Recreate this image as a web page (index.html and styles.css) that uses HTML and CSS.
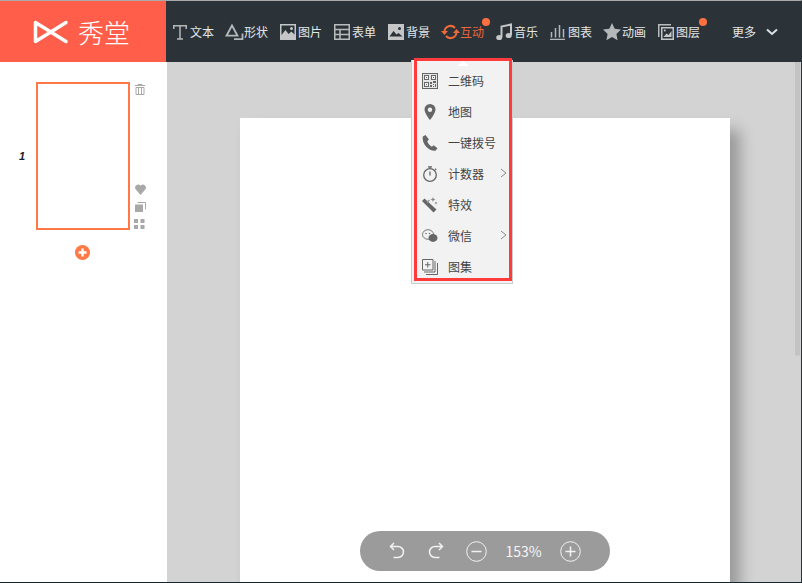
FILE: index.html
```html
<!DOCTYPE html>
<html lang="zh-CN">
<head>
    <meta charset="UTF-8">
    <meta name="viewport" content="width=device-width, initial-scale=1.0">
    <title>秀堂</title>
    <link rel="stylesheet" href="styles.css">
</head>
<body>
    <header class="topbar">
        <div class="logo">
            <svg class="logo-mark" width="36" height="26" viewBox="0 0 36 26"><path d="M2.5 3.500v19L33 3.500M2.500 3.500L33 22.500" fill="none" stroke="#fff" stroke-width="3.500" stroke-linecap="round" stroke-linejoin="round"/></svg>
            <span class="logo-text">秀堂</span>
        </div>
        <nav class="nav">
            <a class="nav-item nav-item-first">
                <svg class="nav-icon" width="16" height="18" viewBox="0 0 16 18"><path d="M.75 6V2.750h12.500V6M7 2.750V16M4 16h6" fill="none" stroke="#b4b8ba" stroke-width="1.500"/></svg>
                文本
            </a>
            <a class="nav-item nav-item-wide">
                <svg class="nav-icon" width="19" height="18" viewBox="0 0 19 18"><path d="M7 2.500l5.500 10.200H1.500zM9 16.200h8.500V10.500" fill="none" stroke="#b4b8ba" stroke-width="1.800"/></svg>
                形状
            </a>
            <a class="nav-item">
                <svg class="nav-icon" width="16" height="16" viewBox="0 0 16 16"><path d="M0 0h16v16H0z" fill="#c4c6c7"/><path d="M1.500 1.500h13v9l-3-3-3 2.500-3-4-4 5z" fill="#2b3338"/><circle cx="11.500" cy="4.500" r="1.500" fill="#c4c6c7"/></svg>
                图片
            </a>
            <a class="nav-item">
                <svg class="nav-icon" width="16" height="16" viewBox="0 0 16 16"><path d="M.75.750h14.500v14.500H.750zM.750 5.500h14.500M.750 10.500h14.500M6 5.500v9.750" fill="none" stroke="#b9bcbd" stroke-width="1.500"/></svg>
                表单
            </a>
            <a class="nav-item nav-item-narrow">
                <svg class="nav-icon" width="16" height="16" viewBox="0 0 16 16"><path d="M0 0h16v16H0z" fill="#c4c6c7"/><path d="M1.500 12.500l4-5.500 3 3.500 2-1.500 4 3.500z" fill="#2b3338"/><circle cx="11.500" cy="4.500" r="1.500" fill="#2b3338"/></svg>
                背景
            </a>
            <a class="nav-item nav-item-active nav-item-wide">
                <svg class="nav-icon" width="19" height="18" viewBox="0 0 19 18"><path d="M3.500 8.500A6 6 0 0 1 14 5M15.500 9.500A6 6 0 0 1 5 13" fill="none" stroke="#ef6a3a" stroke-width="2"/><path d="M0 8h7l-3.500 4zM12 10h7l-3.500-4z" fill="#ef6a3a"/></svg>
                互动
                <i class="dot"></i>
            </a>
            <a class="nav-item">
                <svg class="nav-icon" width="16" height="18" viewBox="0 0 16 18"><path d="M5.500 14V3.500L15 1.500V12" fill="none" stroke="#c4c6c7" stroke-width="2"/><ellipse cx="3.200" cy="14.500" rx="3" ry="2.600" fill="#c4c6c7"/><ellipse cx="12.700" cy="12.500" rx="3" ry="2.600" fill="#c4c6c7"/></svg>
                音乐
            </a>
            <a class="nav-item nav-item-narrow">
                <svg class="nav-icon" width="16" height="16" viewBox="0 0 16 16"><path d="M0 15.500h15M1.500 13.500V8M5.500 13.500V4M9.500 13.500V1M13.500 13.500V5" fill="none" stroke="#b4b8ba" stroke-width="1.500"/></svg>
                图表
            </a>
            <a class="nav-item nav-item-star">
                <svg class="nav-icon" width="18" height="18" viewBox="0 0 18 18"><path d="M9 0l2.700 5.800 6.300.8-4.600 4.300 1.200 6.300L9 14l-5.600 3.200 1.200-6.300L0 6.600l6.300-.8z" fill="#b4b8ba"/></svg>
                动画
            </a>
            <a class="nav-item nav-item-last">
                <svg class="nav-icon" width="16" height="16" viewBox="0 0 16 16"><path d="M.750 13V.750H13" fill="none" stroke="#b9bcbd" stroke-width="1.500"/><path d="M3.750 3.750h11.500v11.500H3.750z" fill="none" stroke="#c4c6c7" stroke-width="1.500"/><path d="M5.500 13l3-3.500 2 1.500 3-4v6z" fill="#c4c6c7"/><circle cx="6.800" cy="6.500" r="1" fill="#c4c6c7"/></svg>
                图层
                <i class="dot"></i>
            </a>
            <a class="nav-more">
                更多
                <svg width="12" height="8" viewBox="0 0 12 8"><path d="M1 1.500l5 4.500 5-4.500" fill="none" stroke="#dfe2e3" stroke-width="2"/></svg>
            </a>
        </nav>
    </header>

    <main class="workspace">
        <aside class="sidebar">
            <div class="slide-row">
                <span class="slide-num">1</span>
                <div class="slide-thumb"></div>
                <div class="slide-tools">
                    <svg width="10" height="11" viewBox="0 0 10 11"><path d="M0 1.500h10M3 1.500V.5h4v1M1 3.500h8v7H1zM3.500 4v6M6.500 4v6" fill="none" stroke="#a8a8a8"/></svg>
                    <div class="slide-tools-bottom">
                        <svg width="11" height="11" viewBox="0 0 11 11"><path d="M5.500 11L.8 5.500A2.900 2.900 0 0 1 5.500 1.800a2.900 2.900 0 0 1 4.700 3.700z" fill="#a8a8a8"/></svg>
                        <svg width="11" height="10" viewBox="0 0 11 10"><path d="M0 2.500h8V10H0z" fill="#a8a8a8"/><path d="M2.500 .5h8v7" fill="none" stroke="#a8a8a8"/></svg>
                        <svg class="slide-tool-grid" width="11" height="10" viewBox="0 0 11 10"><path d="M0 0h4v4H0zM6.500 0h4v4h-4zM0 6h4v4H0zM6.500 6h4v4h-4z" fill="#a8a8a8"/></svg>
                    </div>
                </div>
            </div>
            <svg class="add-slide" width="15" height="15" viewBox="0 0 15 15"><circle cx="7.500" cy="7.500" r="7.500" fill="#ff7846"/><path d="M7.500 3.500v8M3.500 7.500h8" stroke="#fff" stroke-width="2.400"/></svg>
        </aside>

        <section class="canvas">
            <div class="page"></div>
        </section>
    </main>

    <div class="dropdown">
        <i class="dropdown-caret"></i>
        <div class="dropdown-item">
            <svg width="16" height="16" viewBox="0 0 16 16"><path d="M0 0h16v16H0z" fill="#666"/><path d="M1 1h14v14H1z" fill="#e6e6e6"/><path d="M2 2h5v5H2zM9 2h5v5H9zM2 9h5v5H2z" fill="#666"/><path d="M3 3h3v3H3zM10 3h3v3h-3zM3 10h3v3H3z" fill="#f2f2f2"/><path d="M4 4h1v1H4zM11 4h1v1h-1zM4 11h1v1H4zM8 9h2v2H8zM11 8h3v2h-3zM8 12h2v2H8zM11 11h1v1h-1zM13 11h1v3h-1zM11 13h1v1h-1z" fill="#666"/></svg>
            <span>二维码</span>
        </div>
        <div class="dropdown-item">
            <svg width="16" height="16" viewBox="0 0 16 16"><path fill-rule="evenodd" d="M8 0a5.500 5.500 0 0 1 5.500 5.500C13.500 9.500 8 16 8 16S2.500 9.500 2.500 5.500A5.500 5.500 0 0 1 8 0zm0 3.500a2.200 2.200 0 1 0 0 4.400 2.200 2.200 0 0 0 0-4.400z" fill="#666"/></svg>
            <span>地图</span>
        </div>
        <div class="dropdown-item">
            <svg width="16" height="16" viewBox="0 0 16 16"><path d="M3.500 0L0.800 1.500C.2 5 1.500 8.500 4 11.500s6 4.500 9.500 4.300l2-2.500-3.800-3-1.900 1.500C8 10.800 6 8.800 5.300 6.300l1.600-1.700z" fill="#666"/></svg>
            <span>一键拨号</span>
        </div>
        <div class="dropdown-item">
            <svg width="16" height="16" viewBox="0 0 16 16"><circle cx="8" cy="9" r="6.300" fill="none" stroke="#666" stroke-width="1.300"/><path d="M6 .8h4M8 1v2M8 5.500V9.500M13 2.800l1.200 1.200" fill="none" stroke="#666" stroke-width="1.300"/></svg>
            <span>计数器</span>
            <svg class="dropdown-arrow" width="7" height="10" viewBox="0 0 7 10"><path d="M1 1l5 4-5 4" fill="none" stroke="#888"/></svg>
        </div>
        <div class="dropdown-item">
            <svg width="16" height="16" viewBox="0 0 16 16"><path d="M2.500 1.500L0 4l11.500 11.500 3-3z" fill="#666"/><path d="M4.500 4.500l2.500-2 1 1-2.500 2.500z" fill="#999"/><path d="M11 0l.7 1.800 1.800.7-1.800.7L11 5l-.7-1.800-1.800-.7 1.800-.7zM14 4.500l.5 1.100 1.100.5-1.100.5-.5 1.100-.5-1.100-1.100-.5 1.100-.5z" fill="#888"/></svg>
            <span>特效</span>
        </div>
        <div class="dropdown-item">
            <svg width="16" height="16" viewBox="0 0 16 16"><ellipse cx="6" cy="6.500" rx="5.500" ry="4.800" fill="#f2f2f2" stroke="#777"/><ellipse cx="11" cy="10" rx="4.500" ry="3.900" fill="#666"/><circle cx="4" cy="5.500" r=".8" fill="#777"/><circle cx="7.500" cy="5.500" r=".8" fill="#777"/></svg>
            <span>微信</span>
            <svg class="dropdown-arrow" width="7" height="10" viewBox="0 0 7 10"><path d="M1 1l5 4-5 4" fill="none" stroke="#888"/></svg>
        </div>
        <div class="dropdown-item">
            <svg width="16" height="16" viewBox="0 0 16 16"><path d="M.5.500h10.500v10.500H.5zM5.750 3v5.500M3 5.750h5.500M13 2v11H2M15.500 4v11.500H4" fill="none" stroke="#666"/></svg>
            <span>图集</span>
        </div>
    </div>
    <div class="dropdown-outline"></div>

    <div class="zoombar">
        <svg width="18" height="18" viewBox="0 0 18 18"><path d="M6 1L2.500 4.500 6 8M3 4.500h7a5 5 0 0 1 0 11H5.500" fill="none" stroke="#f2f2f2" stroke-width="1.500"/></svg>
        <svg width="18" height="18" viewBox="0 0 18 18"><path d="M12 1l3.500 3.500L12 8M15 4.500H8a5 5 0 0 0 0 11h4.500" fill="none" stroke="#f2f2f2" stroke-width="1.500"/></svg>
        <svg width="21" height="21" viewBox="0 0 21 21"><circle cx="10.500" cy="10.500" r="9.800" fill="none" stroke="#f2f2f2"/><path d="M5.500 10.500h10" stroke="#f2f2f2" stroke-width="1.500"/></svg>
        <span class="zoom-value">153%</span>
        <svg width="21" height="21" viewBox="0 0 21 21"><circle cx="10.500" cy="10.500" r="9.800" fill="none" stroke="#f2f2f2"/><path d="M5.500 10.500h10M10.500 5.500v10" stroke="#f2f2f2" stroke-width="1.500"/></svg>
    </div>

    <div class="scroll-thumb"></div>
</body>
</html>
```

FILE: styles.css
```css
* {
    box-sizing: border-box;
}
html, body {
    height: 100%;
}
body {
    margin: 0;
    display: flex;
    flex-direction: column;
    overflow: hidden;
    position: relative;
    font-family: "Noto Sans CJK SC", "Liberation Sans", sans-serif;
    font-size: 12px;
    background-color: #d3d3d3;
    border-top: 1px solid #a9a9a9;
    border-right: 1px solid #2b3338;
    border-bottom: 1px solid #12282b;
}
.topbar {
    display: flex;
    height: 61px;
    flex-shrink: 0;
    background-color: #2b3338;
}
.logo {
    width: 166px;
    display: flex;
    align-items: center;
    background-color: #ff5f4a;
    padding-left: 33px;
    gap: 9px;
}
.logo-text {
    color: #fff;
    font-size: 26px;
    font-weight: 300;
    line-height: 1;
}
.nav {
    flex: 1;
    display: flex;
    align-items: center;
    padding-left: 7px;
    color: #e4e7e8;
}
.nav-item {
    position: relative;
    display: flex;
    align-items: center;
    gap: 2px;
    width: 54px;
    white-space: nowrap;
}
.nav-item-first {
    width: 52px;
    gap: 1px;
}
.nav-item-narrow {
    width: 53px;
}
.nav-item-wide {
    width: 55px;
    gap: 0;
}
.nav-item-star {
    width: 55px;
    gap: 1px;
}
.nav-item-active {
    color: #f0663a;
}
.nav-item-last {
    width: 74px;
}
.nav-icon {
    flex-shrink: 0;
}
.dot {
    position: absolute;
    top: -5px;
    left: 41px;
    width: 8px;
    height: 8px;
    border-radius: 50%;
    background-color: #ff7040;
}
.nav-more {
    display: flex;
    align-items: center;
    gap: 10px;
}
.workspace {
    flex: 1;
    display: flex;
    min-height: 0;
}
.sidebar {
    width: 167px;
    flex-shrink: 0;
    display: flex;
    flex-direction: column;
    align-items: flex-start;
    background-color: #fff;
    padding-top: 20px;
}
.slide-row {
    display: flex;
    align-items: stretch;
    height: 148px;
}
.slide-num {
    width: 36px;
    align-self: center;
    padding-left: 19px;
    font: italic bold 11px "Liberation Sans", sans-serif;
    color: #222;
}
.slide-thumb {
    width: 94px;
    border: 2px solid #ff7846;
    background-color: #fff;
}
.slide-tools {
    display: flex;
    flex-direction: column;
    justify-content: space-between;
    padding: 2px 0 1px 5px;
}
.slide-tools svg {
    display: block;
}
.slide-tools-bottom {
    display: flex;
    flex-direction: column;
    gap: 7px;
}
.slide-tool-grid {
    margin-left: -1px;
}
.add-slide {
    margin: 15px 0 0 75px;
}
.canvas {
    flex: 1;
    padding: 56px 0 0 73px;
    overflow: hidden;
}
.page {
    width: 490px;
    height: 100%;
    background-color: #fff;
    box-shadow: 10px 12px 14px rgba(0, 0, 0, 0.28);
}
.dropdown {
    position: absolute;
    top: 59px;
    left: 411px;
    width: 102px;
    height: 224px;
    padding-top: 5px;
    background-color: #f2f2f2;
    border: 1px solid #c8cdd0;
    border-top: none;
    color: #444;
}
.dropdown-caret {
    position: absolute;
    top: 1px;
    left: 45px;
    border: 6px solid transparent;
    border-top: none;
    border-bottom: 5px solid #fff;
}
.dropdown-item {
    display: flex;
    align-items: center;
    height: 31px;
    padding-left: 10px;
    gap: 10px;
    position: relative;
}
.dropdown-arrow {
    position: absolute;
    left: 88px;
    top: 10px;
}
.dropdown-outline {
    position: absolute;
    top: 57px;
    left: 414px;
    width: 98px;
    height: 223px;
    border: 3px solid #ff3b3b;
}
.zoombar {
    position: absolute;
    left: 360px;
    top: 530px;
    width: 250px;
    height: 40px;
    display: flex;
    align-items: center;
    padding-left: 28px;
    gap: 21px;
    color: #f5f5f5;
    font-size: 14px;
    background-color: #9b9b9b;
    border-radius: 20px;
}
.zoom-value {
    width: 37px;
    text-align: center;
    margin: 0 -3px;
}
.scroll-thumb {
    position: absolute;
    top: 61px;
    right: 1px;
    width: 5px;
    height: 294px;
    border-radius: 0 0 3px 3px;
    background-color: #c3c3c3;
}
```
